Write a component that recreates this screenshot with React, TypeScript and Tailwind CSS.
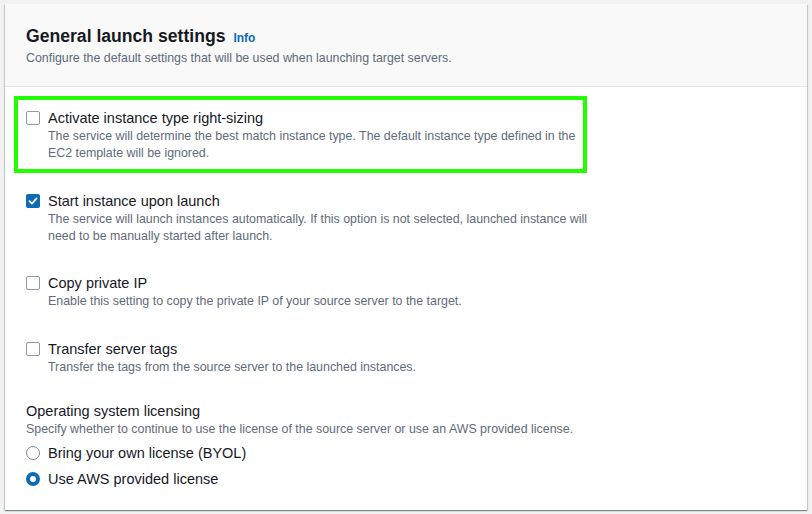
import React from 'react';

const font = { fontFamily: '"Liberation Sans", Arial, sans-serif' };

function Checkbox({ checked }: { checked?: boolean }) {
  if (checked) {
    return (
      <span className="mt-[3px] flex h-[14px] w-[14px] flex-shrink-0 items-center justify-center rounded-[2px] bg-[#0f6ab4]">
        <svg viewBox="0 0 14 14" className="h-[14px] w-[14px]" fill="none">
          <path d="M3.5 7.2 5.9 9.6 10.6 4.4" stroke="white" strokeWidth={1.8} strokeLinecap="round" strokeLinejoin="round" />
        </svg>
      </span>
    );
  }
  return <span className="mt-[3px] h-[14px] w-[14px] flex-shrink-0 rounded-[2px] border border-[#8d99a8] bg-white" />;
}

function Radio({ checked }: { checked?: boolean }) {
  if (checked) {
    return <span className="h-[14px] w-[14px] flex-shrink-0 rounded-full border-[4px] border-[#0f6ab4] bg-white" />;
  }
  return <span className="h-[14px] w-[14px] flex-shrink-0 rounded-full border border-[#7d8998] bg-white" />;
}

function Option({ label, desc, checked }: { label: string; desc: React.ReactNode; checked?: boolean }) {
  return (
    <div className="flex gap-[8px]">
      <Checkbox checked={checked} />
      <div className="flex flex-col">
        <span className="text-[14.5px] leading-[20px] text-[#16191f]">{label}</span>
        <span className="text-[12.4px] leading-[17px] text-[#5f6b7a]">{desc}</span>
      </div>
    </div>
  );
}

export default function App() {
  return (
    <div className="min-h-[514px] bg-[#f2f2f2] px-[5px] pt-[4px]" style={font}>
      <div className="flex flex-col bg-white shadow-[0_1px_1px_0_rgba(0,28,36,0.3),1px_1px_1px_0_rgba(0,28,36,0.15),-1px_1px_1px_0_rgba(0,28,36,0.15)]">
        <div className="border-b border-[#e4e6e8] bg-[#f9f9f9] px-[21px] pb-[19px] pt-[20px]">
          <div className="flex items-baseline gap-[8px]">
            <h2 className="text-[17.6px] font-bold leading-[24px] text-[#16191f]">General launch settings</h2>
            <a className="text-[12px] font-bold text-[#0f6ab4]">Info</a>
          </div>
          <p className="mt-[2px] text-[12.4px] leading-[17px] text-[#5f6b7a]">
            Configure the default settings that will be used when launching target servers.
          </p>
        </div>

        <div className="flex flex-col px-[21px] pb-[21px] pt-[9px]">
          <div className="-ml-[12px] w-[573px] border-[4px] border-[#22ff00] pb-[7px] pl-[8px] pt-[8px]">
            <Option
              label="Activate instance type right-sizing"
              desc={
                <>
                  The service will determine the best match instance type. The default instance type defined in the
                  <br />
                  EC2 template will be ignored.
                </>
              }
            />
          </div>

          <div className="mt-[18px]">
            <Option
              checked
              label="Start instance upon launch"
              desc={
                <>
                  The service will launch instances automatically. If this option is not selected, launched instance will
                  <br />
                  need to be manually started after launch.
                </>
              }
            />
          </div>

          <div className="mt-[28px]">
            <Option label="Copy private IP" desc="Enable this setting to copy the private IP of your source server to the target." />
          </div>

          <div className="mt-[29px]">
            <Option label="Transfer server tags" desc="Transfer the tags from the source server to the launched instances." />
          </div>

          <div className="mt-[25px] flex flex-col">
            <span className="text-[14.5px] leading-[20px] text-[#16191f]">Operating system licensing</span>
            <span className="text-[12.4px] leading-[17px] text-[#5f6b7a]">
              Specify whether to continue to use the license of the source server or use an AWS provided license.
            </span>
            <div className="mt-[5px] flex flex-col gap-[6px]">
              <label className="flex items-center gap-[8px] text-[14.5px] leading-[20px] text-[#16191f]">
                <Radio />
                Bring your own license (BYOL)
              </label>
              <label className="flex items-center gap-[8px] text-[14.5px] leading-[20px] text-[#16191f]">
                <Radio checked />
                Use AWS provided license
              </label>
            </div>
          </div>
        </div>
      </div>
    </div>
  );
}
